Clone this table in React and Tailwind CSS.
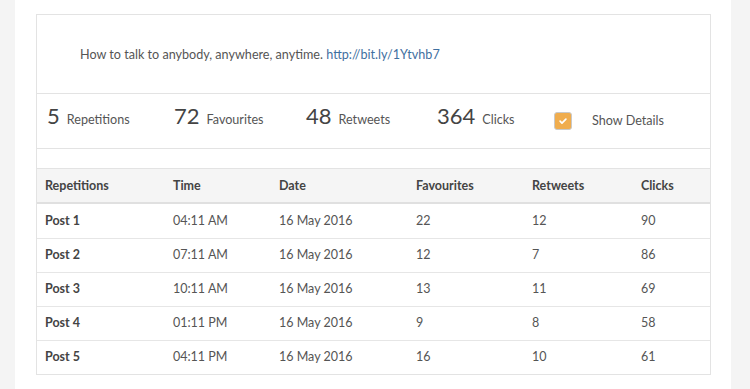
const ROWS = [
  { post: 'Post 1', time: '04:11 AM', date: '16 May 2016', fav: 22, rt: 12, clicks: 90 },
  { post: 'Post 2', time: '07:11 AM', date: '16 May 2016', fav: 12, rt: 7, clicks: 86 },
  { post: 'Post 3', time: '10:11 AM', date: '16 May 2016', fav: 13, rt: 11, clicks: 69 },
  { post: 'Post 4', time: '01:11 PM', date: '16 May 2016', fav: 9, rt: 8, clicks: 58 },
  { post: 'Post 5', time: '04:11 PM', date: '16 May 2016', fav: 16, rt: 10, clicks: 61 },
]

const STATS = [
  { n: 5, label: 'Repetitions', w: 'w-[127px]' },
  { n: 72, label: 'Favourites', w: 'w-[132px]' },
  { n: 48, label: 'Retweets', w: 'w-[131px]' },
  { n: 364, label: 'Clicks', w: 'w-[117px]' },
]

const COLS = 'grid grid-cols-[128px_106px_137px_116px_109px_1fr] pl-2'

function Check() {
  return (
    <span className="grid place-items-center w-[18px] h-[18px] rounded-[3px] bg-[#f0ad4e] border border-[#c9c9c9]">
      <svg width="10" height="10" viewBox="0 0 24 24" fill="none" stroke="#fff"
           strokeWidth="4" strokeLinecap="round" strokeLinejoin="round">
        <path d="M5 12.5l4.5 4.5L19 7.5" />
      </svg>
    </span>
  )
}

export default function App() {
  return (
    <div className="flex h-[389px] bg-[#f4f4f4] font-['Lato','Open_Sans',sans-serif] text-[#555]">
      <div className="ml-[15px] w-[716px] bg-white pt-[14px] pl-[21px]">
        <div className="w-[675px] border border-[#e3e3e3]">
          {/* Tweet text */}
          <div className="h-[78px] flex items-center pl-[43px] pt-[3px] text-[12.6px] text-[#555]">
            <span>
              How to talk to anybody, anywhere, anytime.{' '}
              <a className="text-[#3f6fa0]">http://bit.ly/1Ytvhb7</a>
            </span>
          </div>

          {/* Stats */}
          <div className="h-[55px] flex items-center pl-[10px] border-t border-[#e3e3e3]">
            {STATS.map(s => (
              <div key={s.label} className={`${s.w} flex items-baseline gap-[7px] shrink-0 -mt-[8px]`}>
                <span className="text-[22px] text-[#444] leading-none">{s.n}</span>
                <span className="text-[12.6px] text-[#555]">{s.label}</span>
              </div>
            ))}
            <div className="flex items-center gap-[20px]">
              <Check />
              <span className="text-[12.6px] text-[#555]">Show Details</span>
            </div>
          </div>

          <div className="h-[20px] border-t border-[#e3e3e3]" />

          {/* Table */}
          <div className={`${COLS} h-[36px] items-center pt-[1px] bg-[#f5f5f5] border-t border-[#e3e3e3] border-b-2 border-b-[#e0e0e0] text-[12.5px] font-bold text-[#444]`}>
            <div>Repetitions</div>
            <div>Time</div>
            <div>Date</div>
            <div>Favourites</div>
            <div>Retweets</div>
            <div>Clicks</div>
          </div>
          {ROWS.map((r, i) => (
            <div key={r.post}
                 className={`${COLS} h-[34px] items-center text-[12.5px] ${i > 0 ? 'border-t border-[#e6e6e6]' : ''}`}>
              <div className="font-bold text-[#444]">{r.post}</div>
              <div>{r.time}</div>
              <div>{r.date}</div>
              <div>{r.fav}</div>
              <div>{r.rt}</div>
              <div>{r.clicks}</div>
            </div>
          ))}
        </div>
      </div>
    </div>
  )
}
